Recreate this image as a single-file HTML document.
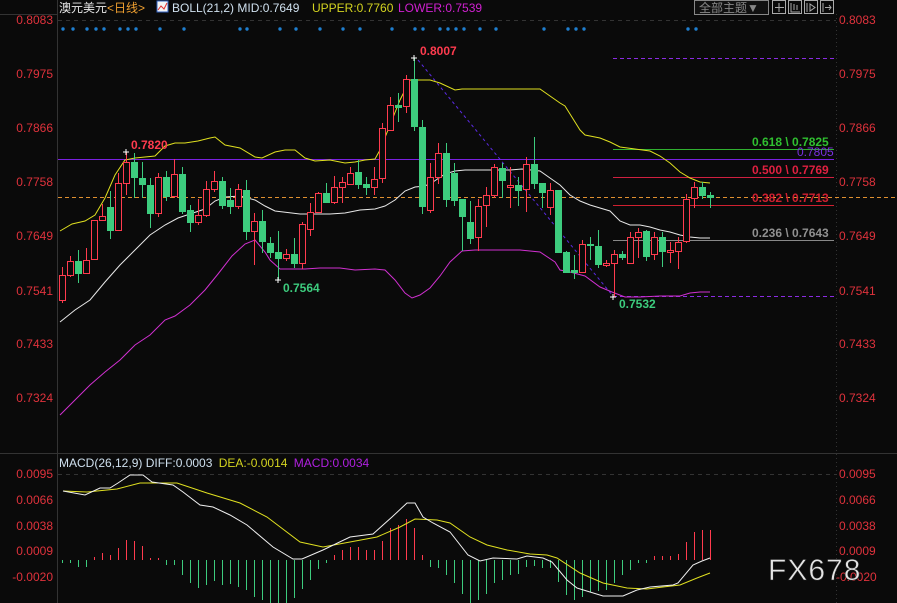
<!DOCTYPE html>
<html><head><meta charset="utf-8"><style>
html,body{margin:0;padding:0;background:#0a0a0a;width:897px;height:603px;overflow:hidden}
svg{display:block}
text{font-family:"Liberation Sans","Noto Sans CJK SC",sans-serif}
</style></head><body>
<svg id="s" width="897" height="603" viewBox="0 0 897 603" xmlns="http://www.w3.org/2000/svg">
<rect width="897" height="603" fill="#0a0a0a"/>
<!-- frame lines -->
<line x1="57.5" y1="0" x2="57.5" y2="603" stroke="#333" stroke-width="1"/>
<line x1="836.5" y1="14" x2="836.5" y2="603" stroke="#333" stroke-dasharray="1,3"/>
<line x1="0" y1="453.5" x2="897" y2="453.5" stroke="#333"/>
<line x1="58" y1="20.5" x2="836" y2="20.5" stroke="#333" stroke-dasharray="4,4"/>
<line x1="58" y1="474.5" x2="836" y2="474.5" stroke="#333" stroke-dasharray="4,4"/>
<line x1="0" y1="14.5" x2="57" y2="14.5" stroke="#333"/>

<!-- header -->
<text x="59" y="12" font-size="12" fill="#e8e8e8">澳元美元<tspan fill="#f0a030">&lt;日线&gt;</tspan></text>
<rect x="157" y="1" width="11" height="11" fill="#f4f4f4" stroke="#3060c0"/>
<polyline points="158,10 161,6 164,9 167,3" fill="none" stroke="#e03030" stroke-width="1"/>
<text x="172" y="12" font-size="12" fill="#cfe0ee">BOLL(21,2) MID:0.7649</text>
<text x="312" y="12" font-size="12" fill="#d4d420">UPPER:0.7760</text>
<text x="398" y="12" font-size="12" fill="#d020d0">LOWER:0.7539</text>

<rect x="694.5" y="0.5" width="74" height="14" fill="#111" stroke="#888"/>
<text x="699" y="12" font-size="12" fill="#888">全部主题▼</text>
<g stroke="#aaa" fill="none">
<rect x="772.5" y="0.5" width="13" height="13"/><rect x="788.5" y="0.5" width="13" height="13"/><rect x="804.5" y="0.5" width="13" height="13"/><rect x="820.5" y="0.5" width="13" height="13"/>
<path d="M779 3v9M775 7.5h9"/><path d="M791 3v9h9M794 4v6M797 5v5"/><path d="M807 3v9M810 4l5 3.5-5 3.5z"/><path d="M823 3v9M825 7.5h6M829 5l2 2.5-2 2.5"/>
</g>

<!-- axes labels -->
<g font-size="12" fill="#e0323c">
<text x="53" y="24" text-anchor="end">0.8083</text>
<text x="53" y="78" text-anchor="end">0.7975</text>
<text x="53" y="132" text-anchor="end">0.7866</text>
<text x="53" y="186" text-anchor="end">0.7758</text>
<text x="53" y="240" text-anchor="end">0.7649</text>
<text x="53" y="295" text-anchor="end">0.7541</text>
<text x="53" y="348" text-anchor="end">0.7433</text>
<text x="53" y="402" text-anchor="end">0.7324</text>
<text x="839" y="24">0.8083</text>
<text x="839" y="78">0.7975</text>
<text x="839" y="132">0.7866</text>
<text x="839" y="186">0.7758</text>
<text x="839" y="240">0.7649</text>
<text x="839" y="295">0.7541</text>
<text x="839" y="348">0.7433</text>
<text x="839" y="402">0.7324</text>
<text x="53" y="478" text-anchor="end">0.0095</text>
<text x="53" y="504" text-anchor="end">0.0066</text>
<text x="53" y="530" text-anchor="end">0.0038</text>
<text x="53" y="555" text-anchor="end">0.0009</text>
<text x="53" y="581" text-anchor="end">-0.0020</text>
<text x="839" y="478">0.0095</text>
<text x="839" y="504">0.0066</text>
<text x="839" y="530">0.0038</text>
<text x="839" y="555">0.0009</text>
<text x="836" y="581">-0.0020</text>
</g>

<!-- dots -->
<g id="dots" fill="#1f7fd0"></g>

<!-- horizontal lines -->
<line x1="58" y1="159.5" x2="834" y2="159.5" stroke="#7a20e0"/>
<line x1="58" y1="197.5" x2="897" y2="197.5" stroke="#e09030" stroke-dasharray="4,3"/>
<line x1="613" y1="58.5" x2="834" y2="58.5" stroke="#8a2be2" stroke-dasharray="4,3"/>
<line x1="613" y1="296.5" x2="834" y2="296.5" stroke="#8a2be2" stroke-dasharray="4,3"/>
<line x1="613" y1="149.5" x2="834" y2="149.5" stroke="#30b030"/>
<line x1="613" y1="177.5" x2="834" y2="177.5" stroke="#d02040"/>
<line x1="613" y1="205.5" x2="834" y2="205.5" stroke="#d02030"/>
<line x1="613" y1="240.5" x2="834" y2="240.5" stroke="#888"/>
<line x1="418" y1="60" x2="613" y2="296" stroke="#5a2ae0" stroke-dasharray="3,3"/>

<!-- bollinger -->
<polyline fill="none" stroke="#e0e020" stroke-width="1" points="60,231 72,224 85,221 95,215 105,198 115,175 125,160 135,158 145,157 155,156 165,146 175,143 185,143 198,141 210,138 215,137 225,145 240,148 255,157 262,158 275,152 285,150 295,150 305,158 315,161 330,160 345,163 355,162 365,160 375,159 380,150 390,125 400,100 410,80 418,80 430,80 440,83 455,90 462,89 470,89 520,89 540,89 550,96 560,103 565,106 570,114 580,130 585,135 600,138 610,142 620,147 650,151 660,156 670,163 680,172 690,178 700,182 710,183"/>
<polyline fill="none" stroke="#e8e8e8" stroke-width="1" points="60,322 75,310 90,300 105,282 120,265 135,250 150,235 165,225 178,218 190,214 205,209 215,201 225,197 240,196 255,200 265,206 275,211 300,214 310,214 330,214 345,213 360,210 375,209 385,206 395,200 405,191 415,187 425,186 433,182 445,174 455,171 465,170 480,170 495,170 510,170 522,169 540,171 550,178 560,185 570,195 580,201 590,205 600,208 610,211 620,221 630,225 640,225 650,227 660,230 670,232 680,235 690,237 700,238 710,238"/>
<polyline fill="none" stroke="#d030d0" stroke-width="1" points="60,415 75,400 90,385 105,372 120,360 135,345 150,335 165,320 175,316 190,305 205,290 218,274 232,256 245,244 255,240 265,252 270,260 280,269 290,269 305,269 320,268 340,268 355,270 375,269 385,270 395,280 405,293 412,298 420,295 430,288 440,276 450,262 462,251 475,250 490,250 520,250 540,252 555,262 560,270 570,272 585,276 600,287 612,292 625,297 640,297 660,296 680,296 690,293 700,292 710,292"/>

<g id="candles"></g>

<!-- markers & labels -->
<path d="M123 152h6M126 149v6M411 58h6M414 55v6M275 280h6M278 277v6M610 297h6M613 294v6" stroke="#fff"/>
<g font-size="12" font-weight="bold">
<text x="131" y="149" fill="#ff3b4e">0.7820</text>
<text x="420" y="55" fill="#ff3b4e">0.8007</text>
<text x="283" y="292" fill="#3dcc7e">0.7564</text>
<text x="619" y="308" fill="#3dcc7e">0.7532</text>
<text x="752" y="146" fill="#30c030">0.618 \ 0.7825</text>
<text x="797" y="156" fill="#7a30e0" font-weight="normal">0.7805</text>
<text x="752" y="174" fill="#e02040">0.500 \ 0.7769</text>
<text x="752" y="202" fill="#d02030">0.382 \ 0.7713</text>
<text x="752" y="237" fill="#909090">0.236 \ 0.7643</text>
</g>

<!-- MACD -->
<text x="59" y="467" font-size="12" fill="#cfe0ee">MACD(26,12,9) DIFF:0.0003 <tspan fill="#d4d420" dx="3">DEA:-0.0014</tspan> <tspan fill="#b020e0" dx="3">MACD:0.0034</tspan></text>
<g id="bars"></g>
<polyline fill="none" stroke="#e0e020" points="63,491 87,492 117,489 140,483 177,483 207,493 240,503 267,517 300,542 323,547 350,542 377,537 400,527 415,519 437,520 450,523 470,537 487,545 507,550 530,554 547,555 557,558 580,573 603,583 627,588 647,589 663,587 680,585 697,578 710,573"/>
<polyline fill="none" stroke="#f0f0f0" points="63,491 85,495 100,488 110,488 118,483 130,475 143,475 152,482 173,485 183,492 200,505 213,507 230,515 247,525 273,547 293,559 302,559 323,550 350,537 373,534 392,517 407,503 415,503 423,517 433,523 450,532 468,555 480,561 493,558 517,559 527,556 543,558 552,562 567,580 577,588 590,592 603,596 623,596 637,590 650,587 673,585 678,583 693,565 702,561 710,558"/>

<text x="768" y="580" font-size="30" fill="#e4e4e4" stroke="#222" stroke-width="0.6" letter-spacing="1">FX678</text>
</svg>
<script>
var NS="http://www.w3.org/2000/svg";
function el(p,t,a){var e=document.createElementNS(NS,t);for(var k in a)e.setAttribute(k,a[k]);p.appendChild(e);return e;}
var dots=[63,73,87,96,104,120,128,136,160,184,240,247,280,296,320,343,360,392,415,423,440,448,456,464,480,496,544,568,576,584,688,696];
var dg=document.getElementById('dots');dots.forEach(function(x){el(dg,'circle',{cx:x,cy:29,r:1.7});});
var C=[[62,275,300,267,303,'r'],[70,261,275,256,277,'r'],[78,261,273,250,283,'g'],[86,260,273,248,273,'r'],[94,220,259,220,259,'r'],[102,216,220,204,220,'r'],[110,207,230,191,239,'g'],[118,183,230,173,230,'r'],[126,162,183,152,195,'r'],[134,162,177,153,198,'g'],[142,178,184,162,198,'g'],[150,185,213,178,228,'g'],[158,177,213,173,217,'r'],[166,177,196,171,201,'g'],[174,174,196,159,198,'r'],[182,174,211,167,214,'g'],[190,210,222,205,232,'g'],[198,215,222,199,225,'r'],[206,189,215,181,217,'r'],[214,181,189,171,192,'r'],[222,181,205,177,209,'g'],[230,200,206,188,214,'g'],[238,189,206,184,209,'r'],[246,190,231,180,240,'g'],[254,221,231,213,265,'r'],[262,221,241,210,253,'g'],[270,243,252,237,258,'g'],[278,252,258,231,280,'g'],[286,254,258,249,261,'r'],[294,254,263,238,268,'g'],[302,224,263,222,269,'r'],[310,212,229,203,236,'r'],[318,193,212,192,212,'r'],[326,193,202,183,202,'g'],[334,187,202,176,204,'r'],[342,182,187,177,203,'r'],[350,173,184,167,184,'r'],[358,172,184,160,189,'g'],[366,184,187,177,195,'g'],[374,179,187,167,195,'r'],[382,128,178,123,183,'r'],[390,105,130,97,131,'r'],[398,105,107,93,122,'g'],[406,79,106,75,113,'r'],[414,79,126,58,131,'g'],[422,127,206,120,214,'g'],[430,177,210,163,213,'r'],[438,153,177,143,184,'r'],[446,153,199,143,207,'g'],[454,173,200,163,206,'g'],[462,199,216,199,251,'g'],[470,222,238,201,244,'g'],[478,206,237,199,251,'r'],[486,195,205,187,227,'r'],[494,167,195,164,198,'r'],[502,168,180,163,198,'g'],[510,185,187,167,208,'r'],[518,185,190,177,206,'g'],[526,164,189,157,212,'r'],[534,164,183,137,189,'g'],[542,183,192,183,208,'g'],[550,190,207,183,215,'r'],[558,190,252,190,253,'g'],[566,252,272,251,273,'g'],[574,270,272,255,279,'g'],[582,244,272,240,273,'r'],[590,244,245,237,260,'g'],[598,246,264,230,268,'g'],[606,263,265,260,267,'r'],[614,254,263,250,297,'r'],[622,254,257,251,260,'g'],[630,237,263,232,263,'r'],[638,232,237,228,258,'r'],[646,231,256,230,261,'g'],[654,237,254,232,260,'r'],[662,237,251,232,267,'g'],[670,250,252,242,263,'r'],[678,242,251,237,269,'r'],[686,199,241,194,243,'r'],[694,187,198,182,208,'r'],[702,187,195,182,199,'g'],[710,195,197,192,208,'g']];
var cg=document.getElementById('candles');
C.forEach(function(c){var x=c[0],col=c[5]=='r'?'#ff3b4e':'#3dcc7e';
 el(cg,'line',{x1:x+.5,x2:x+.5,y1:c[3],y2:c[1],stroke:col});
 el(cg,'line',{x1:x+.5,x2:x+.5,y1:c[2],y2:c[4],stroke:col});
 var h=Math.max(1,c[2]-c[1]);
 if(c[5]=='r')el(cg,'rect',{x:x-2.5,y:c[1]+.5,width:6,height:h,fill:'#0a0a0a',stroke:col});
 else el(cg,'rect',{x:x-3,y:c[1],width:7,height:h+1,fill:col});
});
var B=[[62,563],[70,563],[78,567],[86,567],[94,557],[102,553],[110,555],[118,548],[126,540],[134,541],[142,546],[150,558],[158,558],[166,565],[174,565],[182,575],[190,583],[198,588],[206,585],[214,581],[222,585],[230,584],[238,587],[246,590],[254,597],[262,600],[270,603],[278,603],[286,603],[294,598],[302,589],[310,580],[318,569],[326,563],[334,555],[342,550],[350,547],[358,547],[366,550],[374,550],[382,541],[390,528],[398,525],[406,519],[414,528],[422,555],[430,567],[438,568],[446,575],[454,583],[462,594],[470,603],[478,600],[486,594],[494,583],[502,580],[510,575],[518,574],[526,567],[534,566],[542,568],[550,568],[558,582],[566,595],[574,600],[582,597],[590,592],[598,591],[606,590],[614,583],[622,575],[630,570],[638,563],[646,563],[654,556],[662,556],[670,556],[678,554],[686,542],[694,532],[702,530],[710,530]];
var bg=document.getElementById('bars');
B.forEach(function(b){var col=b[1]<560?'#ff3b4e':'#3dcc7e';el(bg,'line',{x1:b[0]+.5,x2:b[0]+.5,y1:560,y2:b[1],stroke:col});});
</script>
</body></html>
